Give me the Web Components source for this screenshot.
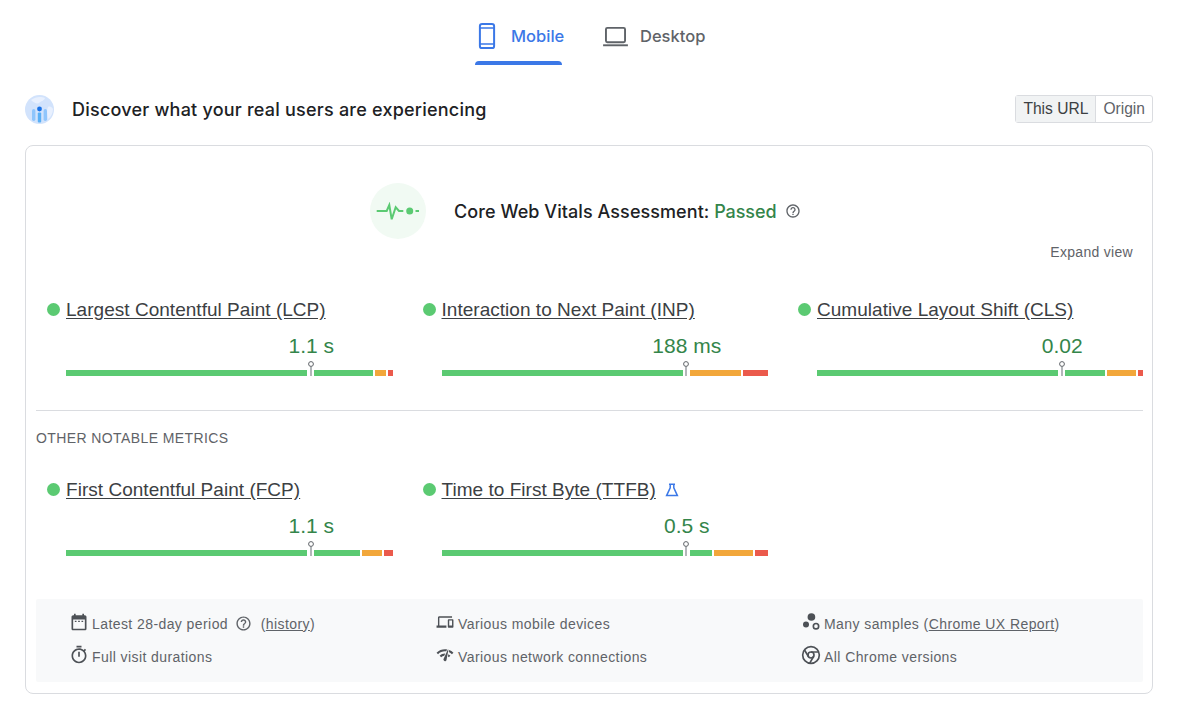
<!DOCTYPE html>
<html><head><meta charset="utf-8"><title>PSI</title>
<style>
html,body{margin:0;background:#fff}
body{width:1200px;height:718px;overflow:hidden;font-family:"Liberation Sans",Arial,sans-serif;color:#3c4043}
</style></head><body>
<psi-tabs></psi-tabs>
<psi-header></psi-header>
<psi-card>
  <psi-assessment></psi-assessment>
  <psi-metric-grid>
    <psi-metric label="Largest Contentful Paint (LCP)" value="1.1 s" segs="241,59,11,5"></psi-metric>
    <psi-metric label="Interaction to Next Paint (INP)" value="188 ms" segs="241,0,51,25"></psi-metric>
    <psi-metric label="Cumulative Layout Shift (CLS)" value="0.02" segs="241,40,29,5"></psi-metric>
  </psi-metric-grid>
  <psi-divider>OTHER NOTABLE METRICS</psi-divider>
  <psi-metric-grid>
    <psi-metric label="First Contentful Paint (FCP)" value="1.1 s" segs="241,46,20,9"></psi-metric>
    <psi-metric label="Time to First Byte (TTFB)" value="0.5 s" segs="241,22.5,39,12.5" flask></psi-metric>
  </psi-metric-grid>
  <psi-footer>
    <psi-fact icon="calendar">Latest 28-day period <psi-help></psi-help> (<u>history</u>)</psi-fact>
    <psi-fact icon="devices">Various mobile devices</psi-fact>
    <psi-fact icon="samples">Many samples (<u>Chrome UX Report</u>)</psi-fact>
    <psi-fact icon="timer">Full visit durations</psi-fact>
    <psi-fact icon="network">Various network connections</psi-fact>
    <psi-fact icon="chrome">All Chrome versions</psi-fact>
  </psi-footer>
</psi-card>
<script>
const IC='#4d5156';
const ICONS={
calendar:['0 0 24 24',`<path fill="${IC}" d="M19 4h-1V2h-2v2H8V2H6v2H5c-1.1 0-2 .9-2 2v14c0 1.1.9 2 2 2h14c1.1 0 2-.9 2-2V6c0-1.1-.9-2-2-2zm0 16H5V9h14v11z"/><path fill="${IC}" d="M7 10.4h2v1.6H7zM11 10.4h2v1.6h-2zM15 10.4h2v1.6h-2z"/>`],
devices:['-2.2 -2.2 28.4 28.4',`<path fill="${IC}" d="M4 6h18V4H4c-1.1 0-2 .9-2 2v11H0v3h14v-3H4V6zm19 2h-6c-.55 0-1 .45-1 1v10c0 .55.45 1 1 1h6c.55 0 1-.45 1-1V9c0-.55-.45-1-1-1zm-1 9h-4v-7h4v7z"/>`],
samples:['0 0 24 24',`<circle cx="12.5" cy="6" r="4.6" fill="${IC}"/><circle cx="6" cy="15" r="3.6" fill="${IC}"/><circle cx="18" cy="17" r="3.2" fill="none" stroke="${IC}" stroke-width="2"/>`],
timer:['0 0 24 24',`<path fill="${IC}" d="M15 1H9v2h6V1zm-4 13h2V8h-2v6zm8.03-6.61l1.42-1.42c-.43-.51-.9-.99-1.41-1.41l-1.42 1.42C16.07 4.74 14.12 4 12 4c-4.97 0-9 4.03-9 9s4.02 9 9 9 9-4.03 9-9c0-2.12-.74-4.07-1.97-5.61zM12 20c-3.87 0-7-3.13-7-7s3.13-7 7-7 7 3.13 7 7-3.13 7-7 7z"/>`],
network:['-1 -1 26 26',`<path fill="${IC}" d="M15.9 5c-.17 0-.32.09-.41.23l-.07.15-5.18 11.65c-.16.29-.26.61-.26.96 0 1.11.9 2.01 2.01 2.01.96 0 1.77-.68 1.96-1.59l.01-.03L16.4 5.5c0-.28-.22-.5-.5-.5zM1 9l2 2c2.88-2.88 6.79-4.08 10.53-3.62l1.19-2.68C9.89 3.84 4.74 5.27 1 9zm20 2l2-2c-1.64-1.64-3.55-2.82-5.59-3.57l-.53 2.82c1.5.62 2.9 1.53 4.12 2.75zm-4 4l2-2c-.8-.8-1.7-1.42-2.66-1.89l-.55 2.92c.42.27.83.59 1.21.97zM5 13l2 2c1.13-1.13 2.56-1.79 4.03-2l1.28-2.88c-2.63-.08-5.3.87-7.31 2.88z"/>`],
chrome:['0 0 24 24',`<g fill="none" stroke="${IC}" stroke-width="2"><circle cx="12" cy="12" r="10"/><circle cx="12" cy="12" r="3.6"/><path d="M12 8.4h9.2M8.9 13.8L4.2 6M15.1 13.8L10.5 21.8"/></g>`]
};
function def(name,html){customElements.define(name,class extends HTMLElement{connectedCallback(){if(this.shadowRoot)return;const r=this.attachShadow({mode:'open'});r.innerHTML=html(this)}})}
const HELP='M11 18h2v-2h-2v2zm1-16C6.48 2 2 6.48 2 12s4.48 10 10 10 10-4.48 10-10S17.52 2 12 2zm0 18c-4.41 0-8-3.59-8-8s3.59-8 8-8 8 3.59 8 8-3.59 8-8 8zm0-14c-2.21 0-4 1.79-4 4h2c0-1.1.9-2 2-2s2 .9 2 2c0 2-3 1.75-3 5h2c0-2.25 3-2.5 3-5 0-2.21-1.79-4-4-4z';

def('psi-tabs',()=>`<style>
:host{display:flex;height:65px;gap:41px;padding-left:475px;font:500 16.5px/24px Inter,"Noto Sans",sans-serif}
.t{display:flex;align-items:center;height:65px;box-sizing:border-box;padding-top:7px;position:relative;color:#5f6368;white-space:nowrap}
.t svg{display:block;flex:none;margin-right:12px}
.t.a{color:#3b78e7;width:87px;padding-left:3px;box-sizing:border-box}
.t.a svg{margin-right:15px}
.t.a::after{content:"";position:absolute;left:0;right:0;bottom:0;height:4px;background:#3b78e7;border-radius:4px 4px 0 0}
</style>
<div class="t a"><svg width="18" height="28" viewBox="0 0 18 28"><rect x="1.9" y="1.9" width="14.2" height="24.2" rx="2.2" fill="none" stroke="#3b78e7" stroke-width="2"/><path d="M2 6h14M2 22h14" stroke="#3b78e7" stroke-width="1.4"/></svg><span>Mobile</span></div>
<div class="t"><svg width="25" height="21" viewBox="0 0 26 22"><rect x="3" y="2" width="20" height="15" rx="1.5" fill="none" stroke="#5f6368" stroke-width="2"/><path d="M0 20.2h26" stroke="#5f6368" stroke-width="2"/></svg><span>Desktop</span></div>`);

def('psi-header',()=>`<style>
:host{display:flex;align-items:flex-start;height:29px;margin:30px 47px 21px 25px}
svg{display:block;margin-right:18px}
h2{flex:1;margin:0;font:500 18px/29px Inter,"Noto Sans",sans-serif;letter-spacing:.22px;color:#202124}
.seg{display:flex;height:28px;box-sizing:border-box;border:1px solid #dadce0;border-radius:3px;font:15.6px/26px "Liberation Sans",Arial,sans-serif;color:#5f6368}
.seg span{padding:0 7px}
.seg .on{background:#f1f3f4;color:#3c4043;border-right:1px solid #dadce0}
</style>
<svg width="29" height="29" viewBox="0 0 29 29"><circle cx="14.5" cy="14.5" r="14.5" fill="#d2e3fc"/><path d="M6 5c4-3 10-4 14-2-1 3-4 3-6 5-2 1-5 0-8-3zM23 12c2-1 4 0 5 2 0 4-2 8-5 10 0-4-2-8 0-12z" fill="#e8f0fe"/><circle cx="14.5" cy="14" r="2.4" fill="#1a73e8"/><rect x="12.8" y="17.5" width="3.4" height="10" rx="1" fill="#5ab0f5"/><rect x="7" y="14" width="3.4" height="12" rx="1.7" fill="#8ec5fc"/><rect x="18.6" y="14" width="3.4" height="12" rx="1.7" fill="#8ec5fc"/></svg>
<h2>Discover what your real users are experiencing</h2>
<div class="seg"><span class="on">This URL</span><span>Origin</span></div>`);

def('psi-card',()=>`<style>
:host{display:block;margin:0 47px 0 25px;box-sizing:border-box;height:549px;border:1px solid #dadce0;border-radius:8px;padding:0 9px 0 10px}
</style><slot></slot>`);

def('psi-assessment',()=>`<style>
:host{display:block;height:152px;padding-top:37px;box-sizing:border-box}
.r{display:flex;align-items:center;height:56px;padding-left:334px}
.c{width:56px;height:56px;border-radius:50%;background:#f1faf3;display:flex;align-items:center;justify-content:center;margin-right:28px}
h3{margin:0;font:500 18px Inter,"Noto Sans",sans-serif;letter-spacing:.07px;color:#202124}
h3 b{font-weight:500;letter-spacing:-.1px;color:#34854a}
svg.h{margin-left:9px}
.e{text-align:right;padding-right:10px;margin-top:3px;font:14px/20px "Liberation Sans",Arial,sans-serif;letter-spacing:.3px;color:#5f6368}
</style>
<div class="r"><div class="c"><svg width="44" height="18" viewBox="0 0 44 18" fill="none"><path d="M.7 9h10L13.3 3l2.4 14.3 4-12L23 9h4.3" stroke="#5bca72" stroke-width="2"/><circle cx="33.7" cy="9" r="3.5" fill="#5bca72"/><path d="M39.5 9h3.5" stroke="#5bca72" stroke-width="2"/></svg></div>
<h3>Core Web Vitals Assessment: <b>Passed</b></h3>
<svg class="h" width="16" height="16" viewBox="0 0 24 24"><path fill="#5f6368" d="${HELP}"/></svg></div>
<div class="e">Expand view</div>`);

def('psi-metric-grid',()=>`<style>
:host{display:grid;grid-template-columns:repeat(3,357px);column-gap:18.5px}
</style><slot></slot>`);

def('psi-metric',(h)=>{
 const [g1,g2,o,r]=h.getAttribute('segs').split(',').map(Number);
 const seg=(w,c)=>w?`<i style="width:${w}px;background:${c}"></i>`:'';
 return `<style>
:host{display:block;padding-left:30px;position:relative}
.dot{position:absolute;left:11px;top:5px;width:13px;height:13px;border-radius:50%;background:#5bca72}
.t{display:flex;align-items:center;height:24px;font:19px/24px "Liberation Sans",Arial,sans-serif;letter-spacing:.03px;color:#3c4043}
.t span{text-decoration:underline;text-underline-offset:2px}
.t svg{margin-left:9px}
.v{margin-top:10px;height:28px;font:21px/28px "Liberation Sans",Arial,sans-serif;color:#34854a;margin-left:calc(75% - 100px);width:200px;text-align:center}
.b{position:relative;width:327px;height:16px;display:flex;align-items:flex-end;gap:2px;padding-bottom:.5px;box-sizing:border-box}
.b i{display:block;height:5.5px}
.m{position:absolute;left:241.5px;top:1px;width:6px;height:15px}
</style>
<div class="dot"></div>
<div class="t"><span>${h.getAttribute('label')}</span>${h.hasAttribute('flask')?'<svg width="14" height="14" viewBox="0 0 14 14" fill="none" stroke="#3b78e7" stroke-width="1.5"><path d="M4 1.2h6M5.2 1.2v3.6L1.6 12.6h10.8L8.8 4.8V1.2"/></svg>':''}</div>
<div class="v">${h.getAttribute('value')}</div>
<div class="b"><i style="width:${g1}px;background:#5bca72;margin-right:5px"></i>${seg(g2,'#5bca72')}${seg(o,'#f2a73b')}${seg(r,'#eb5a4c')}
<svg class="m" viewBox="0 0 6 15"><path d="M3 5.5V15" stroke="#80868b" stroke-width="1.2"/><circle cx="3" cy="3" r="2.4" fill="#fff" stroke="#5f6368" stroke-width="1"/></svg></div>`});

def('psi-divider',()=>`<style>
:host{display:block;margin-top:34px;border-top:1px solid #dadce0;padding-top:17px;height:50px;font:14px/20px "Liberation Sans",Arial,sans-serif;letter-spacing:.4px;color:#5f6368}
</style><slot></slot>`);

def('psi-footer',()=>`<style>
:host{display:grid;grid-template-columns:366px 366px 1fr;grid-auto-rows:33px;margin-top:43px;background:#f8f9fa;padding:8px 0 9px 32.5px;border-radius:2px}
</style><slot></slot>`);

def('psi-fact',(h)=>{const [vb,body]=ICONS[h.getAttribute('icon')];return `<style>
:host{display:flex;align-items:center;font:14px/20px "Liberation Sans",Arial,sans-serif;letter-spacing:.42px;color:#5f6368;white-space:nowrap}
svg{width:20px;height:20px;flex:none;margin-right:3.5px;position:relative;top:-1.5px}
u{text-underline-offset:2px}
</style><svg viewBox="${vb}">${body}</svg><span><slot></slot></span>`});

def('psi-help',()=>`<style>
:host{display:inline-block;vertical-align:-3px;width:17px;height:17px;margin:0 4.5px 0 2.5px}
svg{display:block}
</style><svg width="17" height="17" viewBox="0 0 24 24"><path fill="#5f6368" d="${HELP}"/></svg>`);
</script>
</body></html>
